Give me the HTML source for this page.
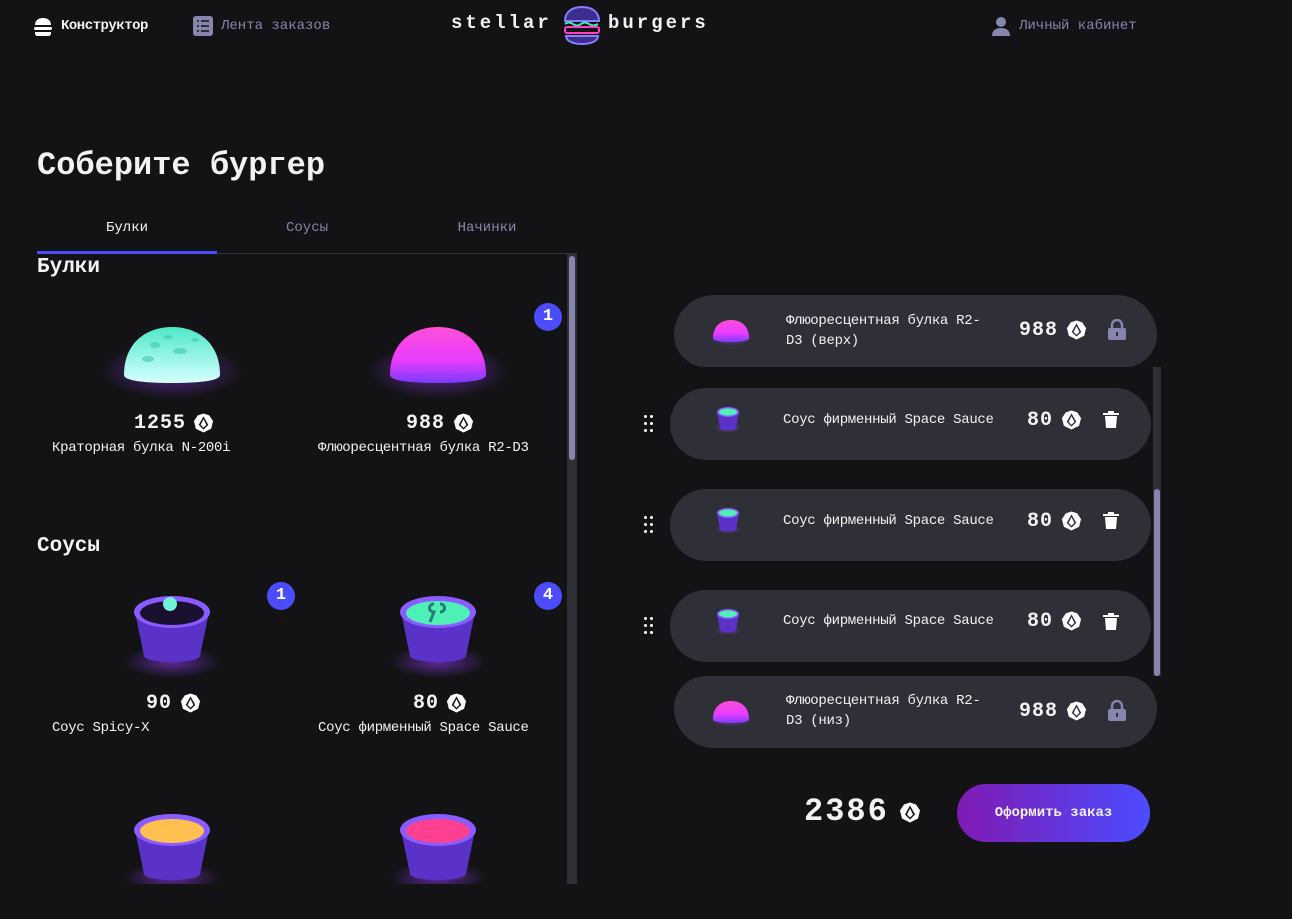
<!DOCTYPE html>
<html><head><meta charset="utf-8">
<style>
*{margin:0;padding:0;box-sizing:border-box}
body{width:1292px;height:919px;background:#131316;color:#f2f2f3;font-family:"Liberation Mono","DejaVu Sans Mono",monospace;position:relative;overflow:hidden}
.a{position:absolute}
.nav{font-size:14px;top:18px}
.num{font-family:"Liberation Mono",monospace;font-weight:bold;letter-spacing:1px}
.card{position:absolute;background:#2f2f37;border-radius:40px;height:72px}
.cname{position:absolute;font-size:14px;line-height:20px;letter-spacing:-0.3px;white-space:nowrap}
.badge{position:absolute;width:28px;height:28px;border-radius:50%;background:#4c4cff;color:#fff;font-weight:bold;font-size:17px;text-align:center;line-height:28px}
.dots{position:absolute;width:12px;height:18px}
.dots i{position:absolute;width:3px;height:3px;background:#fff;border-radius:50%}
.cur{position:absolute}
</style></head><body>
<svg width="0" height="0" style="position:absolute"><defs>
<radialGradient id="g1" cx=".5" cy=".5" r=".5"><stop offset="0" stop-color="#9b3cff" stop-opacity=".55"/><stop offset="1" stop-color="#9b3cff" stop-opacity="0"/></radialGradient>
<linearGradient id="b1" x1="0" y1="0" x2="0" y2="1"><stop offset="0" stop-color="#4fe8c8"/><stop offset="1" stop-color="#d6ffff"/></linearGradient>
<linearGradient id="b2" x1="0" y1="0" x2="0" y2="1"><stop offset="0" stop-color="#ff4fd8"/><stop offset=".6" stop-color="#e83cff"/><stop offset="1" stop-color="#7a3cff"/></linearGradient>
</defs></svg>

<!-- header -->
<svg class="a" style="left:33px;top:17px" width="20" height="20" viewBox="0 0 20 20"><path d="M2 8C2 3 6 1 10 1s8 2 8 7z" fill="#fff"/><rect x="1" y="10" width="18" height="3" rx="1.5" fill="#fff"/><path d="M2 15h16v1c0 2-1 3-3 3H5c-2 0-3-1-3-3z" fill="#fff"/></svg>
<div class="a nav" style="left:61px;color:#f2f2f3;font-weight:bold;letter-spacing:-0.5px">Конструктор</div>
<svg class="a" style="left:193px;top:16px" width="20" height="20" viewBox="0 0 20 20"><rect x="0" y="0" width="20" height="20" rx="3" fill="#8585ad"/><g fill="#2f2f37"><rect x="4" y="4" width="2" height="2"/><rect x="8" y="4" width="8" height="2"/><rect x="4" y="9" width="2" height="2"/><rect x="8" y="9" width="8" height="2"/><rect x="4" y="14" width="2" height="2"/><rect x="8" y="14" width="8" height="2"/></g></svg>
<div class="a nav" style="left:221px;color:#8585ad">Лента заказов</div>

<div class="a" style="left:451px;top:12px;font-size:19px;font-weight:bold;letter-spacing:3px">stellar</div>
<svg class="a" style="left:561px;top:5px" width="42" height="40" viewBox="0 0 42 40"><path d="M4 16C4 6 12 2 21 2s17 4 17 14z" fill="#3a2f8e" stroke="#8a7cff" stroke-width="2"/><path d="M4 19q4-3 8 0t8 0t8 0t9 0" stroke="#3ff0c8" stroke-width="2" fill="none"/><rect x="4" y="22" width="34" height="6" rx="2" fill="none" stroke="#ff3fc0" stroke-width="2"/><path d="M5 31h32c0 5-7 8-16 8S5 36 5 31z" fill="#3a2f8e" stroke="#8a7cff" stroke-width="2"/></svg>
<div class="a" style="left:608px;top:12px;font-size:19px;font-weight:bold;letter-spacing:3px">burgers</div>

<svg class="a" style="left:991px;top:16px" width="20" height="20" viewBox="0 0 20 20"><circle cx="10" cy="6" r="5" fill="#8585ad"/><path d="M1 20c0-6 4-8 9-8s9 2 9 8z" fill="#8585ad"/></svg>
<div class="a nav" style="left:1019px;color:#8585ad">Личный кабинет</div>

<!-- title -->
<div class="a" style="left:37px;top:147px;font-size:32px;font-weight:bold">Соберите бургер</div>

<!-- tabs -->
<div class="a" style="left:37px;top:220px;width:180px;text-align:center;font-size:14px;color:#f2f2f3">Булки</div>
<div class="a" style="left:217px;top:220px;width:180px;text-align:center;font-size:14px;color:#8585ad">Соусы</div>
<div class="a" style="left:397px;top:220px;width:180px;text-align:center;font-size:14px;color:#8585ad">Начинки</div>
<div class="a" style="left:37px;top:253px;width:540px;height:1px;background:#2f2f37"></div>
<div class="a" style="left:37px;top:251px;width:180px;height:3px;background:#4c4cff"></div>

<!-- left scrollbar -->
<div class="a" style="left:567px;top:254px;width:10px;height:630px;background:#2f2f37"></div>
<div class="a" style="left:569px;top:256px;width:6px;height:204px;background:#8585ad;border-radius:3px"></div>

<div class="a" style="left:37px;top:256px;font-size:21px;font-weight:bold">Булки</div>

<!-- bun 1 -->
<svg class="a" style="left:100px;top:305px" width="145" height="100" viewBox="0 0 145 100"><ellipse cx="72" cy="66" rx="70" ry="28" fill="url(#g1)"/><path d="M24 70C24 38 46 22 72 22s48 16 48 48c0 6-22 8-48 8S24 76 24 70z" fill="url(#b1)"/><g fill="#3ec9a8" opacity=".6"><ellipse cx="55" cy="40" rx="5" ry="3"/><ellipse cx="80" cy="46" rx="7" ry="3"/><ellipse cx="68" cy="32" rx="4" ry="2"/><ellipse cx="48" cy="54" rx="6" ry="3"/><ellipse cx="95" cy="35" rx="4" ry="2"/></g></svg>
<div class="a num" style="left:134px;top:412px;font-size:20px">1255</div>
<svg class="cur" style="left:193px;top:413px" width="21" height="20" viewBox="0 0 22 20"><path d="M11 0L5 2 1 8 3 16l8 4 8-4 2-8-4-6z" fill="#fff"/><path d="M11 3l-5 9 5 5 5-5z" fill="#131316"/><path d="M11 6l-3 6 3 3 3-3z" fill="#fff"/></svg>
<div class="a" style="left:52px;top:440px;font-size:14px;letter-spacing:-0.3px">Краторная булка N-200i</div>

<!-- bun 2 -->
<svg class="a" style="left:366px;top:305px" width="145" height="100" viewBox="0 0 145 100"><ellipse cx="72" cy="66" rx="70" ry="28" fill="url(#g1)"/><path d="M24 70C24 38 46 22 72 22s48 16 48 48c0 6-22 8-48 8S24 76 24 70z" fill="url(#b2)"/></svg>
<div class="badge" style="left:534px;top:303px">1</div>
<div class="a num" style="left:406px;top:412px;font-size:20px">988</div>
<svg class="cur" style="left:453px;top:413px" width="21" height="20" viewBox="0 0 22 20"><path d="M11 0L5 2 1 8 3 16l8 4 8-4 2-8-4-6z" fill="#fff"/><path d="M11 3l-5 9 5 5 5-5z" fill="#131316"/><path d="M11 6l-3 6 3 3 3-3z" fill="#fff"/></svg>
<div class="a" style="left:318px;top:440px;font-size:14px;letter-spacing:-0.3px">Флюоресцентная булка R2-D3</div>

<div class="a" style="left:37px;top:535px;font-size:21px;font-weight:bold">Соусы</div>

<!-- sauces -->
<svg class="a" style="left:122px;top:590px" width="100" height="90" viewBox="0 0 100 90"><ellipse cx="50" cy="72" rx="48" ry="16" fill="url(#g1)"/><path d="M13 22L22 66c2 8 54 8 56 0L87 22z" fill="#5a32c8"/><ellipse cx="50" cy="22" rx="38" ry="16" fill="#8a5cff"/><ellipse cx="50" cy="23" rx="32" ry="12" fill="#1a1030"/><circle cx="48" cy="14" r="7" fill="#6ff2d8"/></svg>
<div class="badge" style="left:267px;top:582px">1</div>
<div class="a num" style="left:146px;top:692px;font-size:20px">90</div>
<svg class="cur" style="left:180px;top:693px" width="21" height="20" viewBox="0 0 22 20"><path d="M11 0L5 2 1 8 3 16l8 4 8-4 2-8-4-6z" fill="#fff"/><path d="M11 3l-5 9 5 5 5-5z" fill="#131316"/><path d="M11 6l-3 6 3 3 3-3z" fill="#fff"/></svg>
<div class="a" style="left:52px;top:720px;font-size:14px;letter-spacing:-0.3px">Соус Spicy-X</div>

<svg class="a" style="left:388px;top:590px" width="100" height="90" viewBox="0 0 100 90"><ellipse cx="50" cy="72" rx="48" ry="16" fill="url(#g1)"/><path d="M13 22L22 66c2 8 54 8 56 0L87 22z" fill="#5a32c8"/><ellipse cx="50" cy="22" rx="38" ry="16" fill="#8a5cff"/><ellipse cx="50" cy="23" rx="32" ry="12" fill="#4ff0b8"/><path d="M46 14c-6 0-6 8 0 8l-4 10M52 14c6 0 6 8 0 8" stroke="#2a7a7a" stroke-width="3" fill="none"/></svg>
<div class="badge" style="left:534px;top:582px">4</div>
<div class="a num" style="left:413px;top:692px;font-size:20px">80</div>
<svg class="cur" style="left:446px;top:693px" width="21" height="20" viewBox="0 0 22 20"><path d="M11 0L5 2 1 8 3 16l8 4 8-4 2-8-4-6z" fill="#fff"/><path d="M11 3l-5 9 5 5 5-5z" fill="#131316"/><path d="M11 6l-3 6 3 3 3-3z" fill="#fff"/></svg>
<div class="a" style="left:318px;top:720px;font-size:14px;letter-spacing:-0.3px">Соус фирменный Space Sauce</div>

<svg class="a" style="left:122px;top:808px" width="100" height="76" viewBox="0 0 100 76"><ellipse cx="50" cy="70" rx="48" ry="16" fill="url(#g1)"/><path d="M13 22L22 66c2 8 54 8 56 0L87 22z" fill="#5a32c8"/><ellipse cx="50" cy="22" rx="38" ry="16" fill="#8a5cff"/><ellipse cx="50" cy="23" rx="32" ry="12" fill="#ffc04f"/></svg>
<svg class="a" style="left:388px;top:808px" width="100" height="76" viewBox="0 0 100 76"><ellipse cx="50" cy="70" rx="48" ry="16" fill="url(#g1)"/><path d="M13 22L22 66c2 8 54 8 56 0L87 22z" fill="#5a32c8"/><ellipse cx="50" cy="22" rx="38" ry="16" fill="#8a5cff"/><ellipse cx="50" cy="23" rx="32" ry="12" fill="#ff3f8f"/></svg>
<div class="a" style="left:37px;top:884px;width:540px;height:35px;background:#131316"></div>

<!-- constructor -->
<div class="card" style="left:674px;top:295px;width:483px;border-radius:40px 40px 32px 32px"></div>
<div class="card" style="left:670px;top:388px;width:481px"></div>
<div class="card" style="left:670px;top:489px;width:481px"></div>
<div class="card" style="left:670px;top:590px;width:481px"></div>
<div class="card" style="left:674px;top:676px;width:483px;border-radius:32px 32px 40px 40px"></div>

<div class="a" style="left:1153px;top:367px;width:8px;height:309px;background:#2f2f37"></div>
<div class="a" style="left:1154px;top:489px;width:6px;height:187px;background:#8585ad;border-radius:3px"></div>

<!-- top bun row -->
<svg class="a" style="left:708px;top:316px" width="46" height="30" viewBox="0 0 46 30"><ellipse cx="23" cy="22" rx="22" ry="8" fill="url(#g1)"/><path d="M5 22C5 10 13 4 23 4s18 6 18 18c0 3-8 4-18 4S5 25 5 22z" fill="url(#b2)"/></svg>
<div class="cname" style="left:786px;top:311px">Флюоресцентная булка R2-<br>D3 (верх)</div>
<div class="a num" style="left:1019px;top:319px;font-size:20px">988</div>
<svg class="cur" style="left:1066px;top:320px" width="21" height="20" viewBox="0 0 22 20"><path d="M11 0L5 2 1 8 3 16l8 4 8-4 2-8-4-6z" fill="#fff"/><path d="M11 3l-5 9 5 5 5-5z" fill="#2f2f37"/><path d="M11 6l-3 6 3 3 3-3z" fill="#fff"/></svg>
<svg class="a" style="left:1107px;top:319px" width="20" height="22" viewBox="0 0 20 22"><path d="M5 9V6a5 5 0 0110 0v3" stroke="#8585ad" stroke-width="2.5" fill="none"/><rect x="1" y="9" width="18" height="12" rx="2" fill="#8585ad"/><rect x="9" y="13" width="2" height="4" fill="#2f2f37"/></svg>

<!-- sauce rows -->
<div class="dots" style="left:644px;top:415px"><i style="left:0;top:0"></i><i style="left:6px;top:0"></i><i style="left:0;top:7px"></i><i style="left:6px;top:7px"></i><i style="left:0;top:14px"></i><i style="left:6px;top:14px"></i></div>
<svg class="a" style="left:713px;top:404px" width="30" height="30" viewBox="0 0 30 30"><ellipse cx="15" cy="24" rx="14" ry="5" fill="url(#g1)"/><path d="M4 8l3 16c1 3 15 3 16 0l3-16z" fill="#5a32c8"/><ellipse cx="15" cy="8" rx="11" ry="5" fill="#8a5cff"/><ellipse cx="15" cy="8" rx="9" ry="3.5" fill="#4ff0b8"/></svg>
<div class="cname" style="left:783px;top:410px">Соус фирменный Space Sauce</div>
<div class="a num" style="left:1027px;top:409px;font-size:20px">80</div>
<svg class="cur" style="left:1061px;top:410px" width="21" height="20" viewBox="0 0 22 20"><path d="M11 0L5 2 1 8 3 16l8 4 8-4 2-8-4-6z" fill="#fff"/><path d="M11 3l-5 9 5 5 5-5z" fill="#2f2f37"/><path d="M11 6l-3 6 3 3 3-3z" fill="#fff"/></svg>
<svg class="a" style="left:1103px;top:411px" width="16" height="18" viewBox="0 0 16 18"><rect x="0" y="2" width="16" height="2" fill="#fff"/><rect x="5" y="0" width="6" height="2" fill="#fff"/><path d="M2 5h12l-1 12H3z" fill="#fff"/></svg>

<div class="dots" style="left:644px;top:516px"><i style="left:0;top:0"></i><i style="left:6px;top:0"></i><i style="left:0;top:7px"></i><i style="left:6px;top:7px"></i><i style="left:0;top:14px"></i><i style="left:6px;top:14px"></i></div>
<svg class="a" style="left:713px;top:505px" width="30" height="30" viewBox="0 0 30 30"><ellipse cx="15" cy="24" rx="14" ry="5" fill="url(#g1)"/><path d="M4 8l3 16c1 3 15 3 16 0l3-16z" fill="#5a32c8"/><ellipse cx="15" cy="8" rx="11" ry="5" fill="#8a5cff"/><ellipse cx="15" cy="8" rx="9" ry="3.5" fill="#4ff0b8"/></svg>
<div class="cname" style="left:783px;top:511px">Соус фирменный Space Sauce</div>
<div class="a num" style="left:1027px;top:510px;font-size:20px">80</div>
<svg class="cur" style="left:1061px;top:511px" width="21" height="20" viewBox="0 0 22 20"><path d="M11 0L5 2 1 8 3 16l8 4 8-4 2-8-4-6z" fill="#fff"/><path d="M11 3l-5 9 5 5 5-5z" fill="#2f2f37"/><path d="M11 6l-3 6 3 3 3-3z" fill="#fff"/></svg>
<svg class="a" style="left:1103px;top:512px" width="16" height="18" viewBox="0 0 16 18"><rect x="0" y="2" width="16" height="2" fill="#fff"/><rect x="5" y="0" width="6" height="2" fill="#fff"/><path d="M2 5h12l-1 12H3z" fill="#fff"/></svg>

<div class="dots" style="left:644px;top:617px"><i style="left:0;top:0"></i><i style="left:6px;top:0"></i><i style="left:0;top:7px"></i><i style="left:6px;top:7px"></i><i style="left:0;top:14px"></i><i style="left:6px;top:14px"></i></div>
<svg class="a" style="left:713px;top:606px" width="30" height="30" viewBox="0 0 30 30"><ellipse cx="15" cy="24" rx="14" ry="5" fill="url(#g1)"/><path d="M4 8l3 16c1 3 15 3 16 0l3-16z" fill="#5a32c8"/><ellipse cx="15" cy="8" rx="11" ry="5" fill="#8a5cff"/><ellipse cx="15" cy="8" rx="9" ry="3.5" fill="#4ff0b8"/></svg>
<div class="cname" style="left:783px;top:611px">Соус фирменный Space Sauce</div>
<div class="a num" style="left:1027px;top:610px;font-size:20px">80</div>
<svg class="cur" style="left:1061px;top:611px" width="21" height="20" viewBox="0 0 22 20"><path d="M11 0L5 2 1 8 3 16l8 4 8-4 2-8-4-6z" fill="#fff"/><path d="M11 3l-5 9 5 5 5-5z" fill="#2f2f37"/><path d="M11 6l-3 6 3 3 3-3z" fill="#fff"/></svg>
<svg class="a" style="left:1103px;top:613px" width="16" height="18" viewBox="0 0 16 18"><rect x="0" y="2" width="16" height="2" fill="#fff"/><rect x="5" y="0" width="6" height="2" fill="#fff"/><path d="M2 5h12l-1 12H3z" fill="#fff"/></svg>

<!-- bottom bun -->
<svg class="a" style="left:708px;top:697px" width="46" height="30" viewBox="0 0 46 30"><ellipse cx="23" cy="22" rx="22" ry="8" fill="url(#g1)"/><path d="M5 22C5 10 13 4 23 4s18 6 18 18c0 3-8 4-18 4S5 25 5 22z" fill="url(#b2)"/></svg>
<div class="cname" style="left:786px;top:691px">Флюоресцентная булка R2-<br>D3 (низ)</div>
<div class="a num" style="left:1019px;top:700px;font-size:20px">988</div>
<svg class="cur" style="left:1066px;top:701px" width="21" height="20" viewBox="0 0 22 20"><path d="M11 0L5 2 1 8 3 16l8 4 8-4 2-8-4-6z" fill="#fff"/><path d="M11 3l-5 9 5 5 5-5z" fill="#2f2f37"/><path d="M11 6l-3 6 3 3 3-3z" fill="#fff"/></svg>
<svg class="a" style="left:1107px;top:700px" width="20" height="22" viewBox="0 0 20 22"><path d="M5 9V6a5 5 0 0110 0v3" stroke="#8585ad" stroke-width="2.5" fill="none"/><rect x="1" y="9" width="18" height="12" rx="2" fill="#8585ad"/><rect x="9" y="13" width="2" height="4" fill="#2f2f37"/></svg>

<!-- total -->
<div class="a num" style="left:804px;top:793px;font-size:32px;letter-spacing:2px">2386</div>
<svg class="cur" style="left:899px;top:802px" width="22" height="21" viewBox="0 0 22 20"><path d="M11 0L5 2 1 8 3 16l8 4 8-4 2-8-4-6z" fill="#fff"/><path d="M11 3l-5 9 5 5 5-5z" fill="#131316"/><path d="M11 6l-3 6 3 3 3-3z" fill="#fff"/></svg>
<div class="a" style="left:957px;top:784px;width:193px;height:58px;border-radius:29px;background:linear-gradient(90deg,#801ab3,#4c4cff);text-align:center;line-height:58px;font-size:14px;font-weight:bold">Оформить заказ</div>
</body></html>
